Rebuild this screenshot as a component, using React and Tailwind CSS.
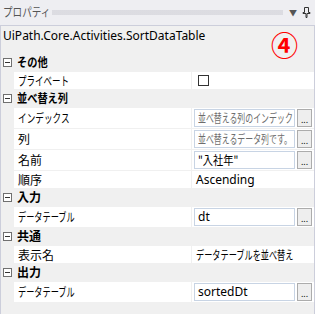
import React from "react";

const latin = { fontFamily: '"Noto Sans", "Noto Sans CJK JP", sans-serif' };
const ja = { fontFamily: '"Noto Sans CJK JP", "Noto Sans", sans-serif' };

// Meiryo UI has narrow kana, so kana-heavy strings get squeezed horizontally
function J({ children, className = "scale-x-[0.7]" }) {
  return (
    <span className={`inline-block origin-left whitespace-nowrap ${className}`} style={ja}>
      {children}
    </span>
  );
}

function Toggle() {
  return (
    <div className="w-[9px] h-[9px] border border-[#707070] bg-white flex items-center justify-center">
      <div className="w-[5px] h-px bg-[#333]" />
    </div>
  );
}

function Category({ label, sx = "scale-x-100" }) {
  return (
    <div className="flex h-[18px] items-center bg-[#f0f0f0] border-b border-[#f0f0f0]">
      <div className="w-[13px] shrink-0 flex justify-center"><Toggle /></div>
      <div className="pl-[3px] font-bold text-[12px] text-black"><J className={sx}>{label}</J></div>
    </div>
  );
}

function Row({ label, sx = "scale-x-100", children, tall }) {
  return (
    <div className={`flex ${tall ? "h-[21px]" : "h-[18px]"} border-b border-[#f0f0f0]`}>
      <div className="w-[13px] shrink-0 bg-[#f0f0f0]" />
      <div className="w-[178px] shrink-0 bg-white flex items-center pl-[4px] text-[12px] text-black border-r border-[#f0f0f0]"><J className={sx}>{label}</J></div>
      <div className="flex-1 min-w-0 bg-white flex items-center px-[2px] text-[12px] text-black whitespace-nowrap overflow-hidden">{children}</div>
    </div>
  );
}

function Box({ children, hint }) {
  return (
    <div className="flex items-center gap-[2px] w-full min-w-0">
      <div className={`flex-1 min-w-0 h-[18px] border border-[#c8d4e4] bg-white flex items-center px-[3px] overflow-hidden whitespace-nowrap ${hint ? "text-[#6d6d6d]" : "text-black"}`}>
        {children}
      </div>
      <div className="w-[15px] shrink-0 h-[18px] border border-[#acacac] bg-[#eeeeee] flex items-end justify-center text-[9px] leading-[12px] text-black">...</div>
    </div>
  );
}

export default function App() {
  return (
    <div className="w-[326px] h-[314px] bg-white overflow-hidden" style={latin}>
      <div className="w-[315px] h-[314px] bg-[#eeeef2] flex flex-col">
        <div className="h-[25px] shrink-0 flex items-center pl-[3px] pr-[4px]">
          <div className="w-[46px] text-[12px] text-[#555]"><J className="scale-x-[0.8]">プロパティ</J></div>
          <div className="flex-1 h-[5px] mx-[3px] bg-[radial-gradient(#c6c6ce_0.6px,transparent_0.8px)] bg-[length:2px_2px]" />
          <span className="text-[8px] text-[#555] ml-[3px]">▼</span>
          <svg width="9" height="11" viewBox="0 0 9 11" className="ml-[5px]">
            <path d="M2.5 0.5h4v5h1.5v1h-3v4h-1v-4h-3v-1h1.5z" fill="none" stroke="#333" strokeWidth="1" />
          </svg>
        </div>
        <div className="flex-1 border-l border-r border-t border-[#cccedb] bg-[#f0f0f0] flex flex-col">
          <div className="h-[27px] shrink-0 flex items-start justify-between pl-[2px] pr-[16px] pt-[1px]">
            <span className="text-[12px] text-black">UiPath.Core.Activities.SortDataTable</span>
            <span className="text-[27px] font-bold text-[#ff0000] leading-none mt-[4px] relative z-10" style={ja}>④</span>
          </div>
          <div className="flex flex-col border-t border-[#f0f0f0]">
            <Category label="その他" sx="scale-x-[0.85]" />
            <Row label="プライベート" sx="scale-x-[0.71]">
              <div className="ml-[4px] w-[11px] h-[11px] border border-[#333] bg-white" />
            </Row>
            <Category label="並べ替え列" sx="scale-x-[0.85]" />
            <Row label="インデックス" sx="scale-x-[0.72]" tall><Box hint><J className="scale-x-[0.66]">並べ替える列のインデック</J></Box></Row>
            <Row label="列" tall><Box hint><J className="scale-x-[0.66]">並べ替えるデータ列です。</J></Box></Row>
            <Row label="名前" tall><Box><J className="scale-x-[0.85]">"入社年"</J></Box></Row>
            <Row label="順序"><span className="pl-[2px]">Ascending</span></Row>
            <Category label="入力" />
            <Row label="データテーブル" sx="scale-x-[0.68]" tall><Box>dt</Box></Row>
            <Category label="共通" />
            <Row label="表示名"><J className="ml-[2px] scale-x-[0.68]">データテーブルを並べ替え</J></Row>
            <Category label="出力" />
            <Row label="データテーブル" sx="scale-x-[0.68]" tall><Box>sortedDt</Box></Row>
          </div>
        </div>
      </div>
    </div>
  );
}
